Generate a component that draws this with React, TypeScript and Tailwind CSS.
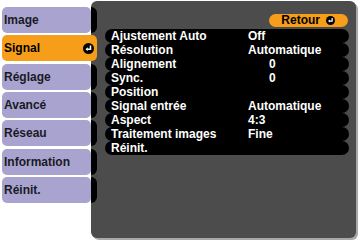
const tabs = ['Image', 'Signal', 'Réglage', 'Avancé', 'Réseau', 'Information', 'Réinit.'];

const rows: { label: string; value?: string; indent?: boolean }[] = [
   { label: 'Ajustement Auto', value: 'Off' },
   { label: 'Résolution', value: 'Automatique' },
   { label: 'Alignement', value: '0', indent: true },
   { label: 'Sync.', value: '0', indent: true },
   { label: 'Position' },
   { label: 'Signal entrée', value: 'Automatique' },
   { label: 'Aspect', value: '4:3' },
   { label: 'Traitement images', value: 'Fine' },
   { label: 'Réinit.' },
];

// black disc with the white "enter" arrow
const EnterIcon = ({ size = 10 }: { size?: number }) => (
   <svg width={size} height={size} viewBox="0 0 10 10" className="shrink-0">
      <circle cx="5" cy="5" r="5" fill="#000" />
      <path d="M6.8 2.3 V5.6 H4" stroke="#fff" strokeWidth="1.4" fill="none" />
      <polygon points="2.2,5.6 4.4,3.9 4.4,7.3" fill="#fff" />
   </svg>
);

const App = () => {
   return (
      <div
         className="w-[360px] h-[242px] bg-white flex font-bold text-[12px] leading-[14px]"
         style={{ fontFamily: '"Liberation Sans", Arial, sans-serif' }}
      >
         {/* menu tabs */}
         <div className="flex flex-col gap-[2.33px] pt-[7px] pl-[2px] w-[91px] shrink-0">
            {tabs.map((tab) =>
               tab === 'Signal' ? (
                  <div
                     key={tab}
                     className="relative z-10 w-[95px] h-[26px] rounded-[5px] bg-[#f69d1a] flex items-center justify-between pl-[2px] pr-[3px] text-black"
                  >
                     <span>{tab}</span>
                     <EnterIcon size={11} />
                  </div>
               ) : (
                  <div
                     key={tab}
                     className="w-[89px] h-[26px] rounded-[5px] bg-[#a8a4cf] flex items-center pl-[2px] text-[#1a1a24]"
                  >
                     {tab}
                  </div>
               )
            )}
         </div>

         {/* settings panel */}
         <div className="mt-[1px] w-[265px] h-[237px] rounded-[6px] bg-[#4c4c4c] shadow-[2px_2px_0_#a8a8a8] flex overflow-hidden">
            <div className="flex flex-col gap-[2.33px] pt-[6px] w-[6px] shrink-0">
               {tabs.map((tab) => (
                  <div key={tab} className="h-[26px] w-[6px] bg-black rounded-r-[6px]" />
               ))}
            </div>
            <div className="flex-1 pl-[8px] pr-[7px] pt-[13px] flex flex-col">
               <div className="flex justify-end pr-[1px]">
                  <div className="h-[13px] rounded-full bg-[#f69d1a] flex items-center pl-[12px] pr-[13px] gap-[6px] text-black leading-[13px]">
                     <span>Retour</span>
                     <EnterIcon size={9} />
                  </div>
               </div>
               <div className="mt-[2px] flex flex-col">
                  {rows.map((row) => (
                     <div
                        key={row.label}
                        className="h-[14px] rounded-full bg-black flex items-center pl-[6px] text-white whitespace-nowrap"
                     >
                        <span className="w-[137px] shrink-0">{row.label}</span>
                        {row.value && (
                           <span className={row.indent ? 'pl-[21px]' : ''}>{row.value}</span>
                        )}
                     </div>
                  ))}
               </div>
            </div>
         </div>
      </div>
   );
};

export default App;
